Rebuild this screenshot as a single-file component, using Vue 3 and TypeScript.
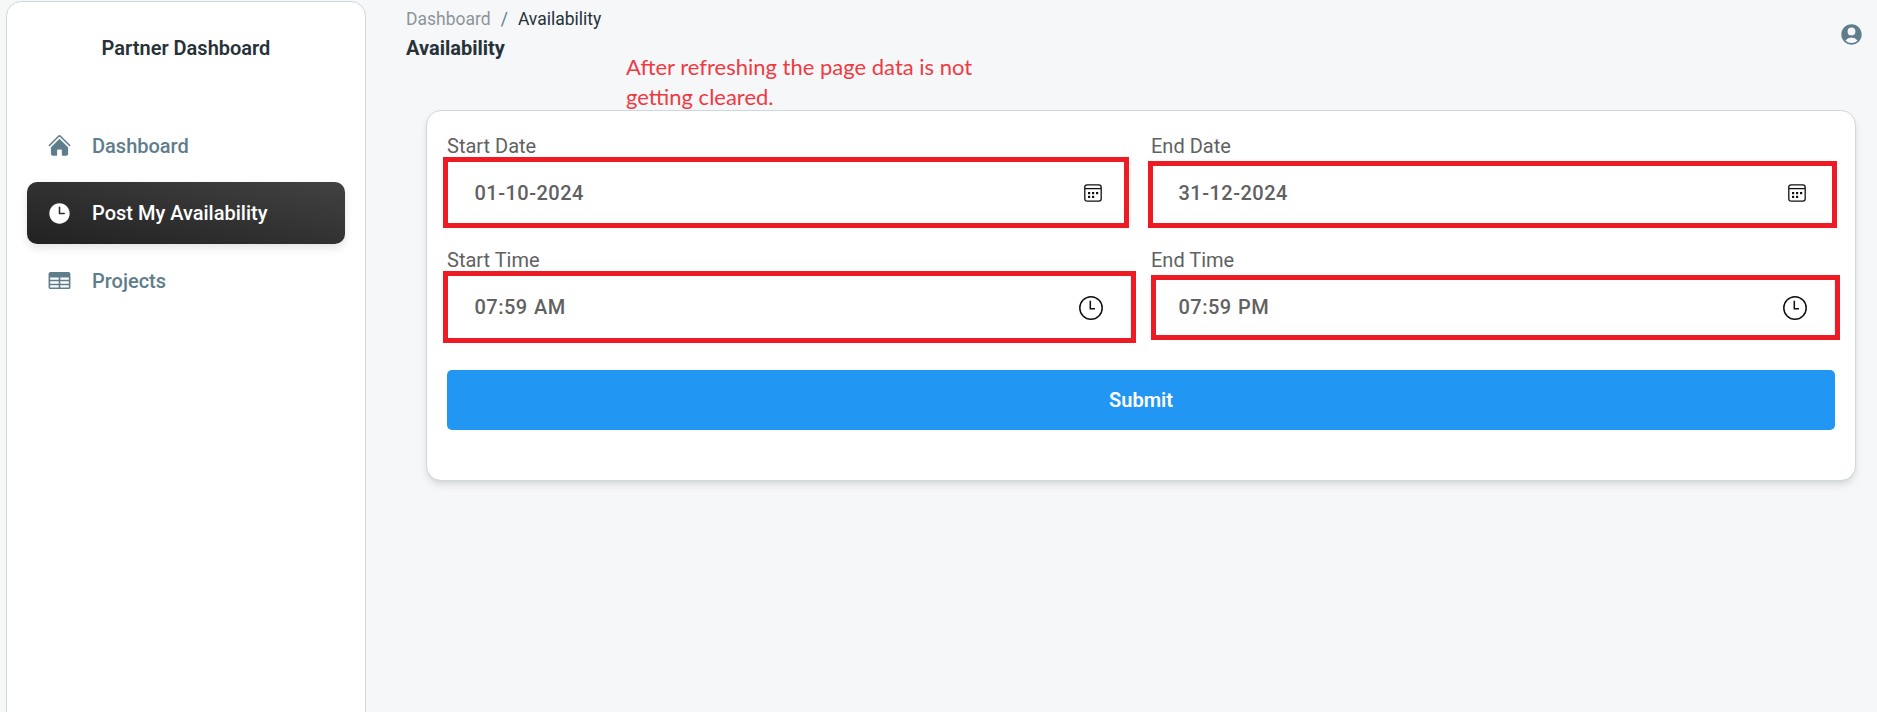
<script setup lang="ts">
interface Field {
  id: string
  label: string
  value: string
  kind: 'date' | 'time'
}

const fields: Field[] = [
  { id: 'start-date', label: 'Start Date', value: '01-10-2024', kind: 'date' },
  { id: 'end-date', label: 'End Date', value: '31-12-2024', kind: 'date' },
  { id: 'start-time', label: 'Start Time', value: '07:59 AM', kind: 'time' },
  { id: 'end-time', label: 'End Time', value: '07:59 PM', kind: 'time' },
]
</script>

<template>
  <div class="page">
    <aside class="sidebar">
      <h6 class="brand">Partner Dashboard</h6>
      <nav class="menu">
        <a class="item">
          <svg class="icon" viewBox="0 0 24 24" fill="currentColor">
            <path d="M11.47 3.84a.75.75 0 011.06 0l8.69 8.69a.75.75 0 101.06-1.06l-8.689-8.69a2.25 2.25 0 00-3.182 0l-8.69 8.69a.75.75 0 001.061 1.06l8.69-8.69z" />
            <path d="M12 5.432l8.159 8.159c.03.03.06.058.091.086v6.198c0 1.035-.84 1.875-1.875 1.875H15a.75.75 0 01-.75-.75v-4.5a.75.75 0 00-.75-.75h-3a.75.75 0 00-.75.75V21a.75.75 0 01-.75.75H5.625a1.875 1.875 0 01-1.875-1.875v-6.198a2.29 2.29 0 00.091-.086L12 5.43z" />
          </svg>
          <span>Dashboard</span>
        </a>
        <a class="item active">
          <svg class="icon" viewBox="0 0 24 24" fill="currentColor">
            <path fill-rule="evenodd" d="M12 2.25c-5.385 0-9.75 4.365-9.75 9.75s4.365 9.75 9.75 9.75 9.75-4.365 9.75-9.75S17.385 2.25 12 2.25zM12.75 6a.75.75 0 00-1.5 0v6c0 .414.336.75.75.75h4.5a.75.75 0 000-1.5h-3.75V6z" />
          </svg>
          <span>Post My Availability</span>
        </a>
        <a class="item">
          <svg class="icon" viewBox="0 0 24 24" fill="currentColor">
            <path fill-rule="evenodd" d="M1.5 5.625c0-1.036.84-1.875 1.875-1.875h17.25c1.035 0 1.875.84 1.875 1.875v12.75c0 1.035-.84 1.875-1.875 1.875H3.375A1.875 1.875 0 011.5 18.375V5.625zM21 9.375A.375.375 0 0020.625 9h-7.5a.375.375 0 00-.375.375v1.5c0 .207.168.375.375.375h7.5a.375.375 0 00.375-.375v-1.5zm0 3.75a.375.375 0 00-.375-.375h-7.5a.375.375 0 00-.375.375v1.5c0 .207.168.375.375.375h7.5a.375.375 0 00.375-.375v-1.5zm0 3.75a.375.375 0 00-.375-.375h-7.5a.375.375 0 00-.375.375v1.5c0 .207.168.375.375.375h7.5a.375.375 0 00.375-.375v-1.5zM10.875 18.75a.375.375 0 00.375-.375v-1.5a.375.375 0 00-.375-.375h-7.5a.375.375 0 00-.375.375v1.5c0 .207.168.375.375.375h7.5zM3.375 15h7.5a.375.375 0 00.375-.375v-1.5a.375.375 0 00-.375-.375h-7.5a.375.375 0 00-.375.375v1.5c0 .207.168.375.375.375zm0-3.75h7.5a.375.375 0 00.375-.375v-1.5A.375.375 0 0010.875 9h-7.5A.375.375 0 003 9.375v1.5c0 .207.168.375.375.375z" />
          </svg>
          <span>Projects</span>
        </a>
      </nav>
    </aside>

    <main class="content">
      <header class="topbar">
        <div>
          <div class="crumbs">
            <span class="parent">Dashboard</span>
            <span class="slash">/</span>
            <span>Availability</span>
          </div>
          <h6 class="title">Availability</h6>
        </div>
        <svg class="user" viewBox="0 0 24 24" fill="currentColor">
          <path fill-rule="evenodd" d="M18.685 19.097A9.723 9.723 0 0021.75 12c0-5.385-4.365-9.75-9.75-9.75S2.25 6.615 2.25 12a9.723 9.723 0 003.065 7.097A9.716 9.716 0 0012 21.75a9.716 9.716 0 006.685-2.653zm-12.54-1.285A7.486 7.486 0 0112 15a7.486 7.486 0 015.855 2.812A8.224 8.224 0 0112 20.25a8.224 8.224 0 01-5.855-2.438zM15.75 9a3.75 3.75 0 11-7.5 0 3.75 3.75 0 017.5 0z" />
        </svg>
      </header>

      <section class="card">
        <p class="note"><span>After refreshing the page data is not</span><br /><span>getting cleared.</span></p>
        <div class="grid">
          <div v-for="f in fields" :key="f.id" class="field" :class="f.id">
            <label class="label">{{ f.label }}</label>
            <div class="input" :class="f.kind">
              <span>{{ f.value }}</span>
              <svg v-if="f.kind === 'date'" class="calendar" viewBox="0 0 18 18">
                <rect x="0.8" y="0.8" width="16.4" height="16.4" rx="2.4" fill="none" stroke="#111" stroke-width="1.3" />
                <path d="M1 4.6h16" stroke="#111" stroke-width="1.3" />
                <g fill="#111">
                  <rect x="4" y="8" width="2.2" height="2.2" /><rect x="8" y="8" width="2.2" height="2.2" /><rect x="12" y="8" width="2.2" height="2.2" />
                  <rect x="4" y="11.8" width="2.2" height="2.2" /><rect x="8" y="11.8" width="2.2" height="2.2" />
                </g>
              </svg>
              <svg v-else class="clock" viewBox="0 0 24 24" fill="none" stroke="#111" stroke-width="1.5">
                <circle cx="12" cy="12" r="11.2" />
                <path d="M11.3 4.8v8H16" />
              </svg>
            </div>
            <div class="mark"></div>
          </div>
        </div>
        <button class="submit">Submit</button>
      </section>
    </main>
  </div>
</template>

<style>
body {
  margin: 0;
  overflow: hidden;
}
</style>

<style scoped>
.page {
  display: flex;
  box-sizing: border-box;
  height: 712px;
  overflow: hidden;
  padding: 1px 21px 0 6px;
  background: #f5f7f9;
  font-family: Roboto, "Liberation Sans", sans-serif;
  font-size: 20px;
  color: #263238;
}
.sidebar {
  box-sizing: border-box;
  flex: none;
  width: 360px;
  height: 860px;
  padding: 0 20px;
  border: 1px solid #cfd8dc;
  border-radius: 15px;
  background: #fff;
}
.brand {
  margin: 0;
  padding-top: 30px;
  font-size: 20px;
  line-height: 32px;
  font-weight: 600;
  text-align: center;
}
.menu {
  display: flex;
  flex-direction: column;
  gap: 5px;
  margin-top: 50.4px;
}
.item {
  display: flex;
  align-items: center;
  gap: 20px;
  box-sizing: border-box;
  height: 62.5px;
  padding: 0 20px;
  border-radius: 10px;
  color: #607d8b;
  font-weight: 500;
}
.item.active {
  color: #fff;
  background: linear-gradient(to top right, #212121, #424242);
  box-shadow: 0 4px 8px rgba(33, 33, 33, 0.12);
}
.icon {
  width: 25px;
  height: 25px;
}
.content {
  flex: 1;
  min-width: 0;
}
.topbar {
  display: flex;
  justify-content: space-between;
  height: 109px;
  padding-left: 40px;
}
.crumbs {
  display: flex;
  gap: 10px;
  height: 32px;
  line-height: 37px;
  font-size: 17.5px;
}
.parent {
  opacity: 0.5;
}
.slash {
  color: #607d8b;
}
.title {
  margin: 0;
  font-size: 20px;
  line-height: 30px;
  font-weight: 700;
}
.user {
  width: 25px;
  height: 25px;
  margin: 21px -7.5px 0 0;
  color: #607d8b;
}
.card {
  position: relative;
  box-sizing: border-box;
  height: 371px;
  margin-left: 60px;
  padding: 20px;
  border: 1px solid #cfd8dc;
  border-radius: 15px;
  background: #fff;
  box-shadow: 0 5px 8px -1px rgba(0, 0, 0, 0.1), 0 2px 4px -2px rgba(0, 0, 0, 0.1);
}
.note {
  position: absolute;
  left: 199px;
  top: -59px;
  margin: 0;
  font-family: Lato, "Liberation Sans", sans-serif;
  font-size: 22px;
  line-height: 30px;
  white-space: nowrap;
  color: #ef3a42;
}
.grid {
  display: grid;
  grid-template-columns: 1fr 1fr;
  gap: 20px;
}
.field {
  position: relative;
  height: 94px;
}
.label {
  display: block;
  line-height: 30px;
  color: #616161;
}
.input {
  display: flex;
  align-items: center;
  justify-content: space-between;
  box-sizing: border-box;
  height: 64px;
  padding: 0 28px 0 27.4px;
  border-right: 1px solid #f1f1f1;
  font-weight: 500;
  letter-spacing: 0.5px;
  word-spacing: 1px;
  color: #616161;
}
.calendar {
  width: 18px;
  height: 18px;
}
.clock {
  width: 24px;
  height: 24px;
  margin: 2px -1px 0 0;
}
.mark {
  position: absolute;
  border: 5px solid #ed1c24;
}
.start-date .mark {
  inset: 26px 2px -3px -4px;
}
.end-date .mark {
  inset: 30px -2px -3px -3px;
}
.start-time .mark {
  inset: 26px -5px -4px -4px;
}
.end-time .mark {
  inset: 30px -5px -1px 0;
}
.submit {
  display: block;
  width: 100%;
  height: 60px;
  margin-top: 31px;
  border: 0;
  border-radius: 5px;
  background: #2196f3;
  color: #fff;
  font: 600 20px Roboto, "Liberation Sans", sans-serif;
}
</style>
